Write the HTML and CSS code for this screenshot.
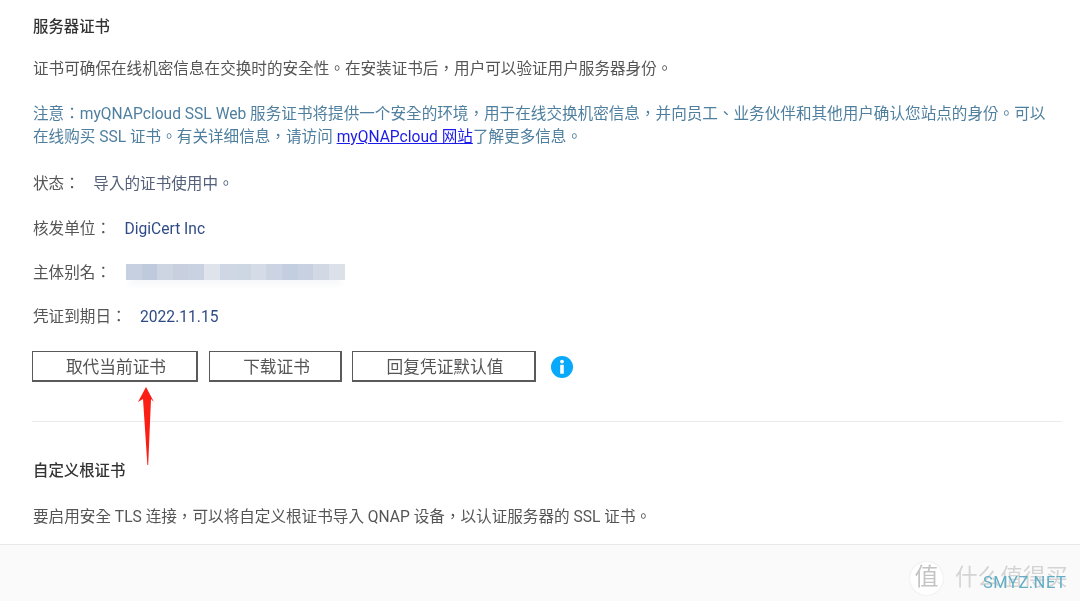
FILE: index.html
```html
<!DOCTYPE html>
<html lang="zh-Hant">
<head>
<meta charset="utf-8">
<title>服务器证书</title>
<link rel="stylesheet" href="styles.css">
</head>
<body>
<main class="content">
  <h2 class="title">服务器证书</h2>
  <p class="desc">证书可确保在线机密信息在交换时的安全性。在安装证书后，用户可以验证用户服务器身份。</p>
  <p class="note">注意：myQNAPcloud SSL Web 服务证书将提供一个安全的环境，用于在线交换机密信息，并向员工、业务伙伴和其他用户确认您站点的身份。可以在线购买 SSL 证书。有关详细信息，请访问 <a class="link" href="#">myQNAPcloud 网站</a>了解更多信息。</p>
  <div class="row row-status"><span class="label">状态：</span><span class="status-value">导入的证书使用中。</span></div>
  <div class="row row-issuer"><span class="label">核发单位：</span><span class="value">DigiCert Inc</span></div>
  <div class="row row-alias"><span class="label">主体别名：</span><span class="mosaic"></span></div>
  <div class="row row-expiry"><span class="label">凭证到期日：</span><span class="value">2022.11.15</span></div>
  <div class="actions">
    <button class="btn btn-replace">取代当前证书</button>
    <button class="btn btn-download">下载证书</button>
    <button class="btn btn-restore">回复凭证默认值</button>
    <svg class="info" viewBox="0 0 22 22" width="22" height="22" aria-hidden="true">
      <circle cx="11" cy="11" r="11" fill="#08a8fb"/>
      <circle cx="11" cy="5.6" r="1.9" fill="#fff"/>
      <rect x="9.2" y="8.8" width="3.6" height="9" rx="0.6" fill="#fff"/>
    </svg>
  </div>
  <hr class="divider">
  <h2 class="title title-root">自定义根证书</h2>
  <p class="desc desc-root">要启用安全 TLS 连接，可以将自定义根证书导入 QNAP 设备，以认证服务器的 SSL 证书。</p>
  <svg class="arrow" viewBox="0 0 16 79" width="16" height="79" aria-hidden="true">
    <path d="M8 0 L16 15 L13 12 L10.2 78 L9.4 78 L5 12 L0 15 Z" fill="#fa1e14"/>
  </svg>
</main>
<footer class="footer">
  <div class="mark">
    <span class="mark-badge">值</span>
    <span class="mark-text">什么值得买</span>
    <span class="mark-site">SMYZ.NET</span>
  </div>
</footer>
</body>
</html>
```
FILE: styles.css
```css
* { box-sizing: border-box; }
html, body { margin: 0; height: 601px; overflow: hidden; }
body {
  display: flex;
  flex-direction: column;
  background: #fff;
  font-family: Roboto, "Noto Sans CJK TC", sans-serif;
  font-size: 15.6px;
  line-height: 23px;
  text-spacing-trim: space-all;
  color: #555;
}
.content {
  position: relative;
  flex: 1;
  padding: 16px 18px 0 32px;
  filter: blur(0.3px);
}
.title, .desc, .note, .label { padding-left: 1px; }
.title { margin: 0; font-size: 15.4px; font-weight: 500; color: #333; }
.desc { margin: 19px 0 0; }
.note { margin: 22px 0 0; padding-right: 12px; color: #4f7f9f; }
.link { color: #1c1ce8; text-decoration: underline; }
.row { display: flex; gap: 13.5px; }
.row-status { margin-top: 24px; }
.row-issuer { margin-top: 22px; }
.row-alias { margin-top: 21px; }
.row-expiry { margin-top: 21px; }
.value { color: #2f4b86; }
.status-value { color: #55607a; }
.mosaic {
  width: 219px;
  height: 16px;
  margin: 2px 0 0 1.5px;
  box-shadow: 0 9px 6px -3px #f8f9fb;
  background: linear-gradient(90deg,
    #c6d0e0 0 15.6px, #bfcadc 0 31.2px, #cdd5e3 0 46.8px, #c8d0df 0 62.4px, #c9d2e0 0 78px,
    #dfe4ec 0 93.6px, #cfd7e4 0 109.2px, #cdd6e3 0 124.8px, #d6dce7 0 140.4px, #ccd4e3 0 156px,
    #c3cee0 0 171.6px, #c8d1e1 0 187.2px, #d2d9e5 0 202.8px, #dbe0e9 0);
}
.actions { display: flex; align-items: center; margin-top: 22px; }
.btn {
  height: 31px;
  margin: 0 11px 0 0;
  padding: 5px 0 0 3px;
  border: solid #5a5a5a;
  border-width: 1px 2px 2px 1px;
  background: #fff;
  font: 16.7px/1 Roboto, "Noto Sans CJK TC", sans-serif;
  color: #555;
}
.btn-replace { width: 166px; }
.btn-download { width: 133px; margin-right: 10px; }
.btn-restore { width: 184px; margin-right: 15px; }
.info { flex: none; }
.divider { height: 1px; margin: 39px 0 0; border: 0; background: #ececec; }
.title-root { margin-top: 38px; }
.desc-root { margin-top: 23px; }
.arrow { position: absolute; left: 138px; top: 387px; }
.footer {
  position: relative;
  flex: none;
  height: 57px;
  border-top: 1px solid #e8e8e8;
  background: #fafafa;
}
.mark { position: absolute; left: 910px; top: 17px; width: 165px; height: 32px; filter: blur(0.4px); }
.mark-badge {
  position: absolute; left: 0; top: 0;
  width: 33px; height: 33px;
  border-radius: 50%;
  background: #fff;
  box-shadow: 0 0 2px #ddd;
  font-size: 24px; line-height: 31px; text-align: center; color: #c4c4c4;
}
.mark-text { position: absolute; left: 45px; top: 1px; font-size: 22.6px; line-height: 30px; color: #d4d4d4; white-space: nowrap; }
.mark-site { position: absolute; left: 73px; top: 12px; font-size: 16.5px; line-height: 18px; letter-spacing: 0.5px; color: #62aec6; white-space: nowrap; }
```
